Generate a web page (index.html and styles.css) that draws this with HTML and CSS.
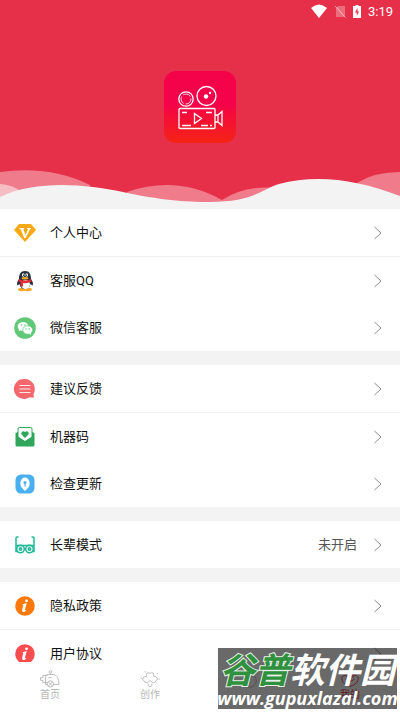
FILE: index.html
```html
<!DOCTYPE html>
<html lang="zh-CN">
<head>
<meta charset="utf-8">
<meta name="viewport" content="width=device-width, initial-scale=1">
<title>我的</title>
<link rel="stylesheet" href="styles.css">
</head>
<body>
<svg class="defs" aria-hidden="true">
  <symbol id="chevron" viewBox="0 0 10 16"><path d="M1.500 2 8 8 1.500 14" fill="none" stroke="#8c8c8c" stroke-width="1"/></symbol>
</svg>
<div class="app">
  <header class="hero">
    <div class="status">
      <svg width="16" height="14" viewBox="0 0 16 14"><path d="M0 4Q8-3 16 4L8 14Z" fill="#fff"/></svg>
      <svg width="12" height="13" viewBox="0 0 12 13"><path d="M4 1h7v11H2V3Z" fill="#fff" opacity=".3"/><path d="M1 1l10.500 11.500" stroke="#fff" opacity=".55"/></svg>
      <svg width="8" height="13" viewBox="0 0 8 13"><path d="M2.500 0h3v1H8v12H0V1h2.500Z" fill="#fff"/><path d="M4.500 3 2 7.500h1.800V11L6 6.500H4.500Z" fill="#e62f48"/></svg>
      <time>3:19</time>
    </div>
    <svg class="logo" viewBox="0 0 72 72" role="img" aria-label="应用图标">
      <defs><linearGradient id="lg" x2="0" y2="1"><stop offset=".45" stop-color="#f5034a"/><stop offset="1" stop-color="#f52314"/></linearGradient></defs>
      <rect width="72" height="72" rx="12" fill="url(#lg)"/>
      <g fill="none" stroke="#fff" stroke-width="1.300">
        <circle cx="22" cy="28" r="7.200"/><circle cx="22" cy="28" r="5" stroke-width=".8" stroke-dasharray="8 2"/>
        <circle cx="42.500" cy="25" r="9.500"/>
        <rect x="15" y="37.500" width="36" height="20" rx="1"/>
        <path d="M30.500 42.500v10l7-5ZM51 44h3v7h-3M54 44l4-3.500v14L54 51" />
        <path d="M18 41.500h5M42 41.500h6M18 54.500h9M37 54.500h7M46 54.500h2"/>
      </g>
      <circle cx="42" cy="25.500" r="2.200" fill="#fff"/><circle cx="46" cy="22" r="1.200" fill="#fff"/>
    </svg>
    <svg class="waves" viewBox="0 0 400 42" preserveAspectRatio="none" aria-hidden="true">
      <path d="M0 5Q50-2 90 18V42H0ZM127 25Q177 8 222 33V42H127ZM222 33Q245 18 277 21V42H222ZM357 16Q374 5 400 5V42H357Z" fill="#fff" fill-opacity=".37"/>
      <path d="M0 17Q12 18 21 24L0 31Z" fill="#fff" fill-opacity=".5"/>
      <path d="M0 30C36 13 84 17 123 25C160 33 185 35 209 35C254 35 262 22 279 17C315 7 357 12 400 29V42H0Z" fill="#f3f3f3"/>
    </svg>
  </header>
  <main class="menu">
    <nav class="group">
      <a class="row" href="#"><svg class="icon" viewBox="0 0 22 22"><path d="M5 2h12l5 6-11 12L0 8Z" fill="#fba911"/><path d="M5.500 6h4.500v1H9.300l2.200 6L14 7h-1V6h4v1h-.8l-4.500 9h-1.500L6.500 7h-1Z" fill="#fff"/></svg><span>个人中心</span><svg class="chevron"><use href="#chevron"/></svg></a>
      <a class="row" href="#"><svg class="icon" viewBox="0 0 22 22"><ellipse cx="8" cy="19.500" rx="4" ry="1.700" fill="#f9a72b"/><ellipse cx="14" cy="19.500" rx="4" ry="1.700" fill="#f9a72b"/><path d="M11 1C6.500 1 5 4.500 5 9c-2 3-2.500 5-1.500 6.500L5.500 14c1 4 3 5 5.500 5s4.500-1 5.500-5l2 1.500c1-1.500.5-3.500-1.500-6.500 0-4.500-1.500-8-6-8Z" fill="#26323e"/><ellipse cx="11.500" cy="14.500" rx="4.500" ry="4.500" fill="#fff"/><path d="M5 9q6 3 12 0l.5 2.500Q13 14 9 13v3.500H6.500v-4L4.500 11Z" fill="#e52d35"/><ellipse cx="9.300" cy="5" rx="1.300" ry="1.800" fill="#fff"/><ellipse cx="12.700" cy="5" rx="1.300" ry="1.800" fill="#fff"/><circle cx="9.600" cy="5.200" r=".6"/><circle cx="12.400" cy="5.200" r=".6"/><ellipse cx="11" cy="8.300" rx="3.500" ry="1.200" fill="#f9a72b"/></svg><span>客服QQ</span><svg class="chevron"><use href="#chevron"/></svg></a>
      <a class="row" href="#"><svg class="icon" viewBox="0 0 22 22"><circle cx="11" cy="11" r="10.800" fill="#60c877"/><path d="M4.500 14 5 12.500a5.500 4.500 0 1 1 4 1.500L6.500 13.500Z" fill="#fff"/><ellipse cx="13.700" cy="13" rx="5" ry="4.200" fill="#fff" stroke="#60c877" stroke-width=".7"/><path d="M15 16l2 2v-3Z" fill="#fff"/><g fill="#60c877"><circle cx="7.500" cy="8" r=".8"/><circle cx="11" cy="8" r=".8"/><circle cx="12" cy="12" r=".7"/><circle cx="15.300" cy="12" r=".7"/></g></svg><span>微信客服</span><svg class="chevron"><use href="#chevron"/></svg></a>
    </nav>
    <nav class="group">
      <a class="row" href="#"><svg class="icon" viewBox="0 0 22 22"><path d="M11 1a10 10 0 1 0 4 18.500h5L19.500 16A10 10 0 0 0 11 1Z" fill="#f4676c"/><path d="M5.500 7.500h11M5.500 11h11M5.500 14.500h11" stroke="#fff" stroke-opacity=".85"/></svg><span>建议反馈</span><svg class="chevron"><use href="#chevron"/></svg></a>
      <a class="row" href="#"><svg class="icon" viewBox="0 0 22 22"><path d="M1.500 7 4 6v4l7 5 7-5V6l2.500 1v12q0 1.500-1.500 1.500H3q-1.500 0-1.500-1.500Z" fill="#2fa65a"/><path d="M4 11V3q0-1.500 1.500-1.500h11Q18 1.500 18 3v8l-7 4.500Z" fill="#fff" stroke="#2fa65a"/><path d="M11 12 7.800 8.800a2 2 0 0 1 3.200-2.800 2 2 0 0 1 3.200 2.800Z" fill="#2fa65a"/></svg><span>机器码</span><svg class="chevron"><use href="#chevron"/></svg></a>
      <a class="row" href="#"><svg class="icon" viewBox="0 0 22 22"><rect x="1.500" y="1.500" width="19" height="19" rx="5.500" fill="#48aff0"/><path d="M11 4.500a4.800 6 0 0 0-2.500 11L11 18l2.500-2.500A4.800 6 0 0 0 11 4.500Z" fill="#fff"/><circle cx="11" cy="9.500" r="1.500" fill="#48aff0"/><path d="M11 9v4.500" stroke="#48aff0" stroke-width="1.200"/></svg><span>检查更新</span><svg class="chevron"><use href="#chevron"/></svg></a>
    </nav>
    <nav class="group">
      <a class="row" href="#"><svg class="icon" viewBox="0 0 22 22"><g fill="none" stroke="#20b999" stroke-width="1.500"><path d="M4.500 3H3Q2 3 2 4v13.500h2M17.500 3H19q1 0 1 1v13.500h-2M2 11.500h18"/><circle cx="6.500" cy="15" r="3.800"/><circle cx="15.500" cy="15" r="3.800"/><circle cx="6.500" cy="15" r="1.200"/><circle cx="15.500" cy="15" r="1.200"/></g></svg><span>长辈模式</span><span class="value">未开启</span><svg class="chevron"><use href="#chevron"/></svg></a>
    </nav>
    <nav class="group">
      <a class="row" href="#"><svg class="icon" viewBox="0 0 22 22"><circle cx="11" cy="11" r="9.800" fill="#ff7908"/><circle cx="12.500" cy="5.800" r="1.400" fill="#fff"/><path d="M8 9.500 12.800 8l-2 7q.5.800 2-.5-1.500 2.800-3.700 2.500-1.400-.3-1-2.200L9.400 10Z" fill="#fff"/></svg><span>隐私政策</span><svg class="chevron"><use href="#chevron"/></svg></a>
      <a class="row" href="#"><svg class="icon" viewBox="0 0 22 22"><circle cx="11" cy="11" r="9.800" fill="#fb4d4f"/><circle cx="12.500" cy="5.800" r="1.400" fill="#fff"/><path d="M8 9.500 12.800 8l-2 7q.5.800 2-.5-1.500 2.800-3.700 2.500-1.400-.3-1-2.200L9.400 10Z" fill="#fff"/></svg><span>用户协议</span><svg class="chevron"><use href="#chevron"/></svg></a>
    </nav>
  </main>
  <nav class="tabs">
    <a class="tab" href="#"><svg viewBox="0 0 24 20"><path d="M9 6H4v2.500H1.500v3H4V14h5M9 16H7V8q0-3 3-3h6q6 1 6 11h-6M12.500 5V3.500"/><circle cx="12.500" cy="2.200" r="1.500"/><circle cx="12.500" cy="15.500" r="3.500"/><path d="M10.500 13.500l4 4M14.500 13.500l-4 4M10 8.500h4"/></svg><span>首页</span></a>
    <a class="tab" href="#"><svg viewBox="0 0 24 20"><path d="M9.500 14H8q-2.500 0-2.500-2-2.500-1-1.500-3 1.500-2 4-2V5q0-2 2-2 1 0 2 1 1-1 2-1 2 0 2 2v2q2.500 0 4 2 1 2-1.500 3 0 2-2.500 2h-1.500q-1-2-2.500-2t-2.500 2ZM10 15v2l1 1.500h2l1-1.500v-2M6 2h1.500M1.500 9H3M19.500 4H21M21.500 10H23"/></svg><span>创作</span></a>
    <a class="tab" href="#" aria-label="消息"><svg viewBox="0 0 24 20"><circle cx="12" cy="12" r="7"/></svg></a>
    <a class="tab active" href="#"><svg viewBox="0 0 24 20"><path d="M7 6q1-4 5-4t5 4q5 0 4 5-2 6-9 7-7-1-9-7-1-5 4-5ZM7 10q5 5 10 0"/><circle cx="9" cy="7" r="1"/><circle cx="15" cy="7" r="1"/></svg><span>我的</span></a>
  </nav>
  <div class="watermark">
    <strong><em>谷普</em>软件园</strong>
    <span>www.gupuxlazal.com</span>
  </div>
</div>
</body>
</html>
```
FILE: styles.css
```css
* { box-sizing: border-box; }
body {
  margin: 0;
  background: #f3f3f3;
  color: #111;
  font-family: Roboto, "Noto Sans CJK SC", sans-serif;
}
a { color: inherit; text-decoration: none; }
.defs { display: none; }
.app {
  height: 100vh;
  display: flex;
  flex-direction: column;
  position: relative;
  overflow: hidden;
}
.hero {
  flex: none;
  background: #e62f48;
  display: flex;
  flex-direction: column;
  align-items: center;
}
.status {
  align-self: stretch;
  height: 22px;
  padding: 0 7px;
  display: flex;
  justify-content: flex-end;
  align-items: center;
  gap: 7px;
  color: #fff;
  font-size: 13px;
}
.logo { width: 72px; height: 72px; margin: 49px 0 24px; }
.waves { display: block; width: 100%; height: 42px; }
.menu {
  flex: 1;
  min-height: 0;
  overflow: hidden;
  display: flex;
  flex-direction: column;
  gap: 14px;
}
.group { flex: none; background: #fff; }
.row {
  height: 47px;
  padding: 0 17px 0 14px;
  display: flex;
  align-items: center;
  font-size: 13px;
  line-height: 16px;
}
.row:first-child:not(:last-child) {
  height: 48px;
  border-bottom: 1px solid #f0f0f0;
}
.icon { width: 22px; height: 22px; margin-right: 14px; }
.chevron { width: 10px; height: 16px; margin-left: auto; }
.value { margin-left: auto; color: #555; }
.value + .chevron { margin-left: 16px; }
.tabs {
  flex: none;
  height: 50px;
  background: #fff;
  display: flex;
}
.tab {
  flex: 1;
  display: flex;
  flex-direction: column;
  align-items: center;
  padding-top: 8px;
  color: #b5b5b5;
  font-size: 10px;
  line-height: 14px;
}
.tab svg {
  width: 24px;
  height: 18px;
  fill: none;
  stroke: currentColor;
  stroke-width: 1;
}
.active { color: #e62f48; }
.watermark {
  position: absolute;
  right: 3px;
  bottom: 3px;
  width: 179px;
  height: 61px;
  display: flex;
  flex-direction: column;
  align-items: center;
  background: rgba(20, 20, 20, 0.64);
  color: #fff;
  white-space: nowrap;
}
.watermark strong {
  margin-top: 6px;
  font-size: 35px;
  line-height: 36px;
  font-weight: 700;
  font-style: italic;
}
.watermark em {
  color: #2f9140;
  -webkit-text-stroke: 2px #e4f2e4;
  paint-order: stroke fill;
}
.watermark span {
  font: italic 700 18px/16px "Open Sans", sans-serif;
}
```
